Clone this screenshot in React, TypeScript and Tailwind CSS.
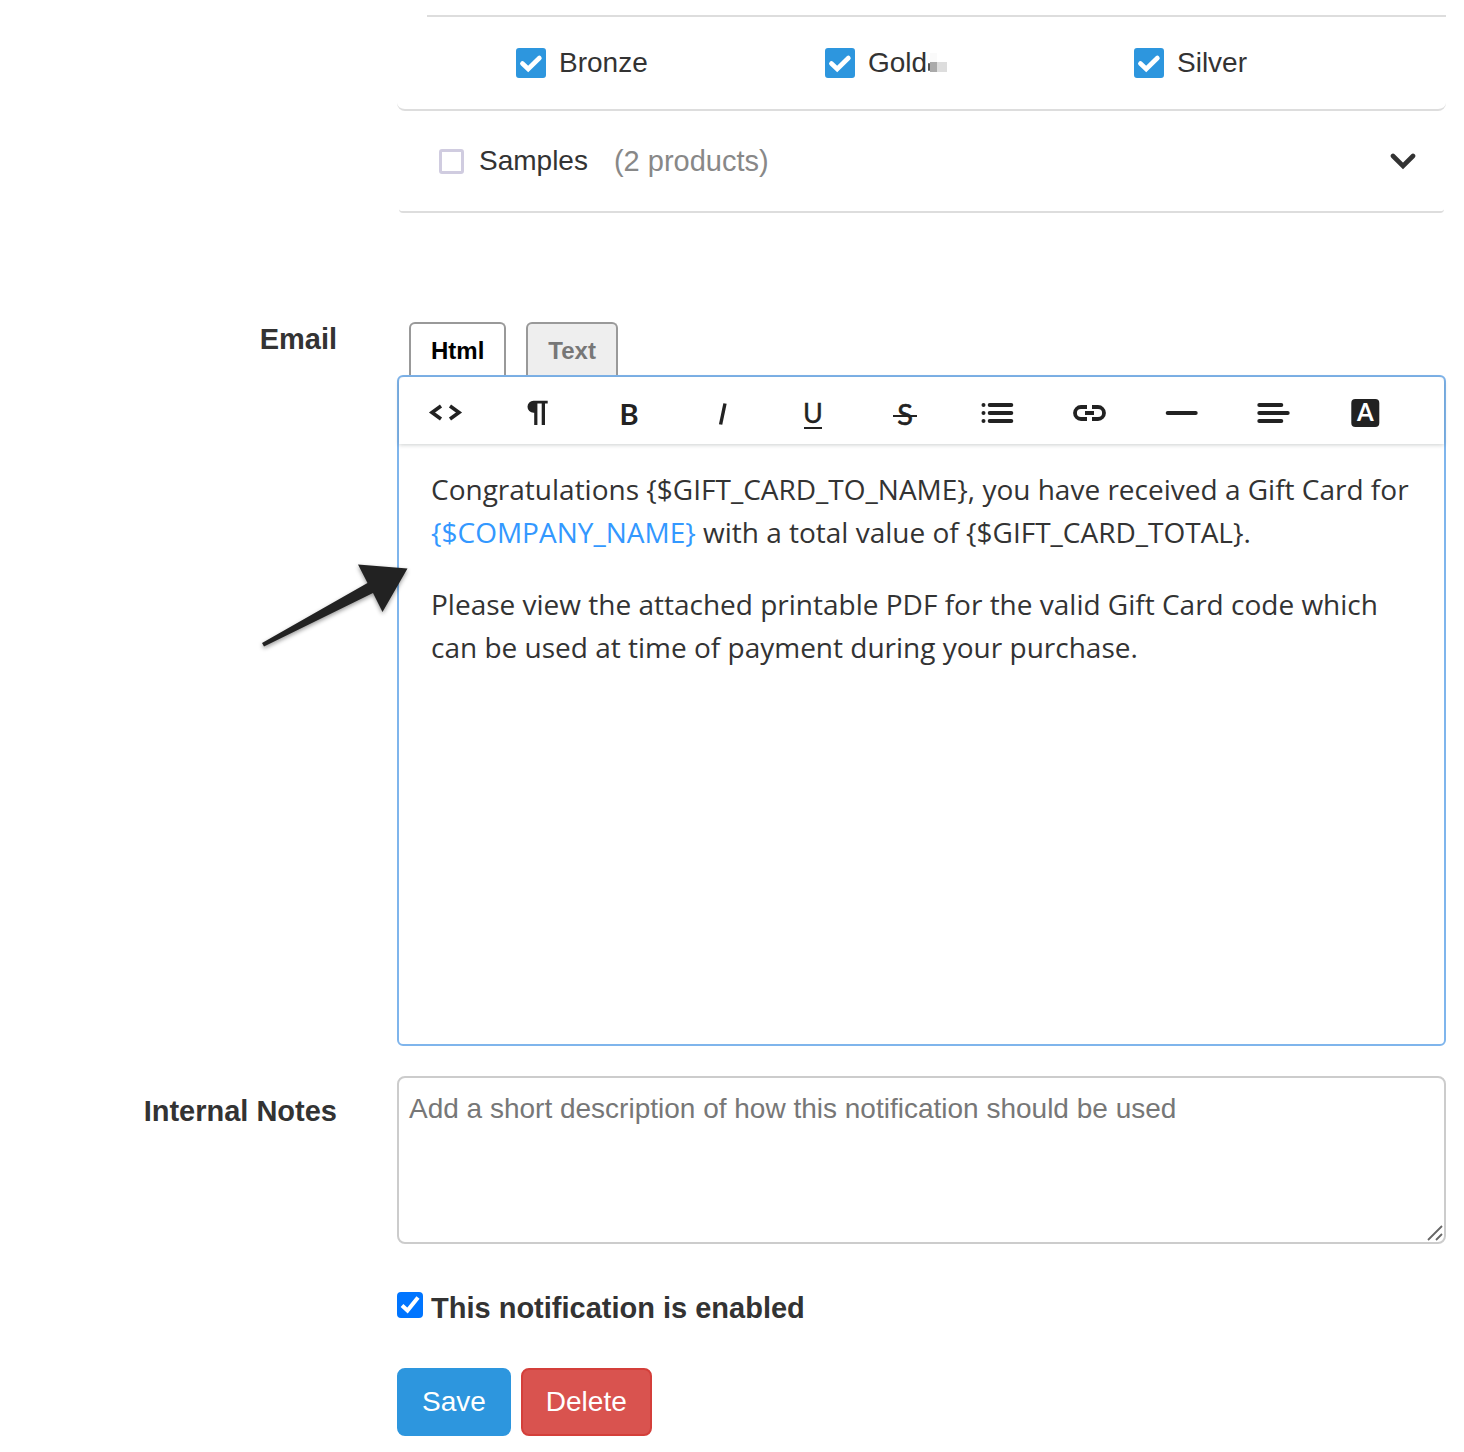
import React, { useState } from "react";

const METALS = ["Bronze", "Gold", "Silver"];

interface CheckProps {
  id: string;
  checked: boolean;
  onChange: (checked: boolean) => void;
}

// Blue product tick box
const ProductCheckbox: React.FC<CheckProps> = ({ id, checked, onChange }) => (
  <span className="grid shrink-0">
    <input
      id={id}
      type="checkbox"
      checked={checked}
      onChange={(e) => onChange(e.target.checked)}
      className="peer col-start-1 row-start-1 size-[30px] appearance-none rounded-[3px] border-2 border-[#d0cce0] bg-white checked:border-[#2d96de] checked:bg-[#2d96de]"
    />
    <svg
      viewBox="0 0 30 30"
      className="pointer-events-none invisible col-start-1 row-start-1 size-[30px] peer-checked:visible"
    >
      <path
        d="M6.4 15.5 L12.2 21 L23.4 10"
        fill="none"
        stroke="white"
        strokeWidth="4.6"
        strokeLinecap="round"
      />
    </svg>
  </span>
);

const line = {
  fill: "none",
  stroke: "currentColor",
  strokeWidth: 4,
  strokeLinecap: "round" as const,
};

const TOOLS = [
  {
    label: "Source code",
    icon: (
      <path
        d="M16 13 L7 19.5 L16 26 M25 13 L34 19.5 L25 26"
        fill="none"
        stroke="currentColor"
        strokeWidth="3.6"
      />
    ),
  },
  {
    label: "Paragraph",
    icon: (
      <path
        d="M30.7 7.7 H16.5 A6 6 0 0 0 16.5 19.7 H17.2 V32 H20.4 V10.5 H24.7 V32 H28 V10.5 H30.7 Z"
        fill="currentColor"
      />
    ),
  },
  {
    label: "Bold",
    icon: (
      <text x="20" y="32" textAnchor="middle" fontSize="29" fontWeight="700" fill="currentColor">
        B
      </text>
    ),
  },
  {
    label: "Italic",
    icon: <path d="M24 10.5 L19.6 31.5" fill="none" stroke="currentColor" strokeWidth="3.4" />,
  },
  {
    label: "Underline",
    icon: (
      <>
        <text
          x="20"
          y="29.5"
          textAnchor="middle"
          fontSize="27"
          fill="currentColor"
          stroke="currentColor"
          strokeWidth="0.4"
        >
          U
        </text>
        <path d="M11 35 H29" stroke="currentColor" strokeWidth="2" />
      </>
    ),
  },
  {
    label: "Strikethrough",
    icon: (
      <>
        <text
          x="20"
          y="32"
          textAnchor="middle"
          fontSize="29"
          fill="currentColor"
          stroke="currentColor"
          strokeWidth="0.6"
        >
          S
        </text>
        <path d="M8 23 H32" stroke="currentColor" strokeWidth="2" />
      </>
    ),
  },
  {
    label: "List",
    icon: (
      <>
        <g fill="currentColor">
          <circle cx="6.5" cy="12" r="2" />
          <circle cx="6.5" cy="20" r="2" />
          <circle cx="6.5" cy="28" r="2" />
        </g>
        <path d="M12.7 12 H34.3 M12.7 20 H34.3 M12.7 28 H34.3" {...line} />
      </>
    ),
  },
  {
    label: "Link",
    icon: (
      <>
        <path
          d="M18 14 H12 A6 6 0 0 0 12 26 H18 M23 14 H29 A6 6 0 0 1 29 26 H23"
          fill="none"
          stroke="currentColor"
          strokeWidth="3.8"
        />
        <path d="M16 20 H25" stroke="currentColor" strokeWidth="4" />
      </>
    ),
  },
  { label: "Horizontal line", icon: <path d="M6.7 20 H34.7" {...line} /> },
  {
    label: "Align",
    icon: <path d="M6.3 12 H28.3 M6.3 20 H34.7 M6.3 28 H28.3" {...line} />,
  },
  {
    label: "Text color",
    icon: (
      <>
        <rect x="6.3" y="6" width="28" height="28" rx="4" fill="currentColor" />
        <text x="20.3" y="28" textAnchor="middle" fontSize="24" fontWeight="700" fill="white">
          A
        </text>
      </>
    ),
  },
];

const EmailEditor = () => {
  const [tab, setTab] = useState("Html");

  return (
    <div className="relative min-w-0 flex-1">
      <div className="flex gap-5 px-3">
        {["Html", "Text"].map((name) => (
          <button
            key={name}
            type="button"
            onClick={() => setTab(name)}
            className={
              "h-[53px] rounded-t-md border-2 border-b-0 border-[#999] px-5 pt-0.5 text-2xl font-bold " +
              (tab === name ? "bg-white text-black" : "bg-[#eee] text-[#777]")
            }
          >
            {name}
          </button>
        ))}
      </div>

      <div className="min-h-[671px] rounded-md border-2 border-[#7fb5ec]">
        <div className="flex h-[67px] rounded-t-md pt-1 text-[#222] shadow-[0_1px_4px_rgba(0,20,20,0.2)]">
          {TOOLS.map((tool) => (
            <button
              key={tool.label}
              type="button"
              aria-label={tool.label}
              className="flex w-[92px] items-center justify-center"
            >
              <svg viewBox="0 0 40 40" className="size-10 font-['Lato',sans-serif]">
                {tool.icon}
              </svg>
            </button>
          ))}
        </div>
        <div
          role="textbox"
          aria-label="Email body"
          contentEditable
          suppressContentEditableWarning
          className="space-y-[29px] px-8 pt-6 font-['Open_Sans',sans-serif] text-[28px] leading-[43px] outline-none"
        >
          <p>
            Congratulations {"{$GIFT_CARD_TO_NAME}"}, you have received a Gift Card for{" "}
            <a href="#company" className="text-[#3398ff]">
              {"{$COMPANY_NAME}"}
            </a>{" "}
            with a total value of {"{$GIFT_CARD_TOTAL}"}.
          </p>
          <p>
            Please view the attached printable PDF for the valid Gift Card code which can be
            used at time of payment during your purchase.
          </p>
        </div>
      </div>

      {/* Pointer to the email body */}
      <svg
        viewBox="0 0 160 100"
        className="pointer-events-none absolute top-[233px] -left-[142px] h-[100px] w-[160px] drop-shadow-[0_2px_2px_rgba(0,0,0,0.4)]"
      >
        <path
          d="M152.5 13.5 L103 9.5 L112.5 28 L7 88 L9 91.5 L118 38 L127.5 57 Z"
          fill="#222"
        />
      </svg>
    </div>
  );
};

export default function App() {
  const [metals, setMetals] = useState(METALS);
  const [samples, setSamples] = useState(false);
  const [enabled, setEnabled] = useState(true);

  const toggleMetal = (name: string, checked: boolean) => {
    setMetals(checked ? [...metals, name] : metals.filter((m) => m !== name));
  };

  return (
    <form className="bg-white pt-[15px] pr-[18px] pb-4 font-['Liberation_Sans',Arial,sans-serif] text-[28px] leading-[34px] text-[#333]">
      <div className="ml-[397px]">
        <div className="rounded-b-lg border-b-2 border-[#ddd] pl-[30px]">
          <div className="grid h-[94px] grid-cols-3 items-center border-t-2 border-[#ddd] pr-[3px] pl-[89px]">
            {METALS.map((name) => (
              <div key={name} className="flex items-center">
                <ProductCheckbox
                  id={name}
                  checked={metals.includes(name)}
                  onChange={(checked) => toggleMetal(name, checked)}
                />
                <label htmlFor={name} className="pl-[13px]">
                  {name}
                </label>
                {name === "Gold" && (
                  <svg viewBox="0 0 20 20" className="size-5">
                    <rect x="1" y="10" width="2" height="8" rx="1" fill="#555" />
                    <rect x="3" y="0" width="7" height="9" fill="#fafafa" />
                    <rect x="3" y="9" width="7" height="10" fill="#aaa" />
                    <rect x="10" y="9" width="10" height="10" fill="#ddd" />
                  </svg>
                )}
              </div>
            ))}
          </div>
        </div>
        <div className="mx-0.5 flex h-[102px] items-center rounded-sm border-b-2 border-[#ddd] px-[28px] pl-10">
          <input
            id="samples"
            type="checkbox"
            checked={samples}
            onChange={(e) => setSamples(e.target.checked)}
            className="size-[25px] appearance-none rounded-[3px] border-[3px] border-[#d0cce0] checked:bg-[#2d96de]"
          />
          <label htmlFor="samples" className="pl-[15px]">
            Samples
          </label>
          <span className="pl-[26px] text-[29px] text-[#888]">(2 products)</span>
          <button type="button" aria-label="Expand Samples" className="ml-auto">
            <svg viewBox="0 0 26 18" className="h-[18px] w-[26px]">
              <path
                d="M3 4 L13 14 L23 4"
                fill="none"
                stroke="#333"
                strokeWidth="4.6"
                strokeLinecap="round"
              />
            </svg>
          </button>
        </div>
      </div>

      <div className="mt-[109px] flex gap-[60px]">
        <span className="w-[337px] shrink-0 text-right text-[29px] font-bold">Email</span>
        <EmailEditor />
      </div>

      <div className="mt-[30px] flex gap-[60px]">
        <label
          htmlFor="notes"
          className="w-[337px] shrink-0 pt-[18px] text-right text-[29px] font-bold"
        >
          Internal Notes
        </label>
        <div className="grid min-w-0 flex-1">
          <textarea
            id="notes"
            placeholder="Add a short description of how this notification should be used"
            className="col-start-1 row-start-1 h-[168px] w-full resize-none rounded-lg border-2 border-[#ccc] px-2.5 py-3.5 placeholder:text-[#777]"
          />
          <svg
            viewBox="0 0 18 18"
            className="pointer-events-none col-start-1 row-start-1 mr-0.5 mb-0.5 size-[18px] self-end justify-self-end"
          >
            <path d="M2 16 L16 2 M10 16 L16 10" stroke="#666" strokeWidth="1.8" />
          </svg>
        </div>
      </div>

      <div className="ml-[397px]">
        <div className="mt-12 flex items-start">
          <span className="grid">
            <input
              id="enabled"
              type="checkbox"
              checked={enabled}
              onChange={(e) => setEnabled(e.target.checked)}
              className="peer col-start-1 row-start-1 size-[26px] appearance-none rounded-[4px] border-2 border-[#777] bg-white checked:border-[#0075ff] checked:bg-[#0075ff]"
            />
            <svg
              viewBox="0 0 26 26"
              className="pointer-events-none invisible col-start-1 row-start-1 size-[26px] peer-checked:visible"
            >
              <path d="M5 13.5 L10.5 18.5 L21 5.5" fill="none" stroke="white" strokeWidth="4" />
            </svg>
          </span>
          <label htmlFor="enabled" className="pl-2 text-[29px] leading-8 font-bold">
            This notification is enabled
          </label>
        </div>

        <div className="mt-11 flex gap-2.5 text-white">
          <button
            type="button"
            className="h-[68px] rounded-lg border-2 border-[#2d96de] bg-[#2d96de] px-[23px]"
          >
            Save
          </button>
          <button
            type="button"
            className="h-[68px] rounded-lg border-2 border-[#d43f3a] bg-[#d9534f] px-[23px]"
          >
            Delete
          </button>
        </div>
      </div>
    </form>
  );
}
